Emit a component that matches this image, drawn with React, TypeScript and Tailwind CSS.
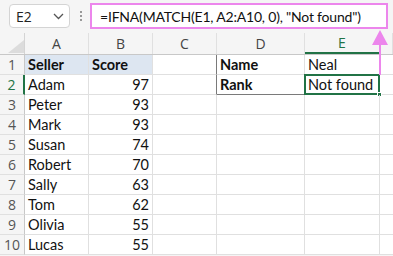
import React from "react";

const cols = [
  { key: "A", w: "w-[64px]" },
  { key: "B", w: "w-[64px]" },
  { key: "C", w: "w-[64px]" },
  { key: "D", w: "w-[88px]" },
  { key: "E", w: "w-[75px]" },
  { key: "F", w: "flex-1" },
];

const data: [string, string][] = [
  ["Adam", "97"],
  ["Peter", "93"],
  ["Mark", "93"],
  ["Susan", "74"],
  ["Robert", "70"],
  ["Sally", "63"],
  ["Tom", "62"],
  ["Olivia", "55"],
  ["Lucas", "55"],
];

const cellFont = { fontFamily: "Lato, 'Noto Sans', sans-serif" };

export default function App() {
  return (
    <div
      className="relative h-[256px] w-[393px] overflow-hidden bg-[#f5f5f5]"
      style={{ fontFamily: "'Open Sans', 'Noto Sans', sans-serif" }}
    >
      {/* formula bar */}
      <div className="flex h-[33px] items-start pt-[3px]">
        <div className="ml-[9px] mt-[1px] flex h-[24px] w-[61px] items-center justify-between rounded-[4px] border border-[#d4d4d4] bg-white pl-[6px] pr-[5px] text-[14px] text-[#222]">
          <span>E2</span>
          <svg width="11" height="7" viewBox="0 0 11 7" fill="none">
            <path d="M1 1l4.5 4.5L10 1" stroke="#555" strokeWidth="1.3" />
          </svg>
        </div>
        <div className="ml-[10px] mr-[8px] mt-[8px] flex flex-col gap-[2px]">
          <span className="h-[2px] w-[2px] bg-[#999]" />
          <span className="h-[2px] w-[2px] bg-[#999]" />
          <span className="h-[2px] w-[2px] bg-[#999]" />
        </div>
        <div
          className="flex h-[26px] w-[298px] items-center overflow-hidden whitespace-nowrap border-2 border-[#ec86ec] bg-white pl-[8px] text-[14px] tracking-[-0.2px] text-[#111]"
          style={{ fontFamily: "Lato, sans-serif" }}
        >
          =IFNA(MATCH(E1, A2:A10, 0), "Not found")
        </div>
      </div>

      {/* column headers */}
      <div className="flex h-[22px] border-b border-[#c8c8c8] text-[14px] text-[#444]">
        <div className="relative w-[25px] border-r border-[#d4d4d4]">
          <svg className="absolute left-[8px] top-[7px]" width="16" height="13" viewBox="0 0 16 13">
            <path d="M16 0V13H0Z" fill="#dcdcdc" />
          </svg>
        </div>
        {cols.map((c) => (
          <div
            key={c.key}
            className={`${c.w} flex items-center justify-center border-r border-[#e0e0e0] ${
              c.key === "E" ? "border-b-2 border-b-[#217346] text-[#217346]" : ""
            }`}
          >
            {c.key === "F" ? "" : c.key}
          </div>
        ))}
      </div>

      {/* rows */}
      <div className="bg-white text-[14.5px] text-[#111]" style={cellFont}>
        {Array.from({ length: 10 }).map((_, i) => {
          const r = i + 1;
          const row = r === 1 ? null : data[i - 1];
          return (
            <div key={r} className="flex h-[20px]">
              <div
                className={`flex w-[25px] items-center justify-center border-b border-r bg-[#f5f5f5] text-[14px] ${
                  r === 2
                    ? "border-r-2 border-r-[#217346] border-b-[#e0e0e0] bg-[#e6e6e6] text-[#217346]"
                    : "border-b-[#e0e0e0] border-r-[#c8c8c8] text-[#555]"
                }`}
                style={{ fontFamily: "'Open Sans', sans-serif" }}
              >
                {r}
              </div>
              <div
                className={`flex w-[64px] items-center border-b border-r border-[#e0e0e0] pl-[3px] ${
                  r === 1 ? "bg-[#dde6f1] font-bold" : ""
                }`}
              >
                {r === 1 ? "Seller" : row![0]}
              </div>
              <div
                className={`flex w-[64px] items-center border-b border-r border-[#e0e0e0] ${
                  r === 1 ? "bg-[#dde6f1] pl-[3px] font-bold" : "justify-end pr-[3px]"
                }`}
              >
                {r === 1 ? "Score" : row![1]}
              </div>
              <div
                className={`w-[64px] border-b border-r ${
                  r <= 2 ? "border-b-[#e0e0e0] border-r-[#7a7a7a]" : "border-[#e0e0e0]"
                }`}
              />
              <div
                className={`flex w-[88px] items-center border-b border-r pl-[3px] font-bold ${
                  r === 2 ? "border-b-[#7a7a7a] border-r-[#e0e0e0]" : "border-[#e0e0e0]"
                }`}
              >
                {r === 1 ? "Name" : r === 2 ? "Rank" : ""}
              </div>
              <div className="relative flex w-[75px] items-center border-b border-r border-[#e0e0e0] pl-[3px]">
                {r === 1 ? "Neal" : ""}
                {r === 2 && (
                  <>
                    <span>Not found</span>
                    <div className="absolute -left-[1px] -top-[1px] h-[21px] w-[76px] border-2 border-[#217346]" />
                    <div className="absolute -right-[3px] -bottom-[3px] h-[5px] w-[5px] border border-white bg-[#217346]" />
                  </>
                )}
              </div>
              <div className="flex-1 border-b border-[#e0e0e0]" />
            </div>
          );
        })}
      </div>

      {/* pink arrow */}
      <div className="absolute left-[379px] top-[40px] h-[35px] w-[2px] bg-[#ec86ec]" />
      <svg className="absolute left-[372px] top-[30px]" width="16" height="15" viewBox="0 0 16 15">
        <path d="M8 0L16 15H0Z" fill="#ec86ec" />
      </svg>
    </div>
  );
}
